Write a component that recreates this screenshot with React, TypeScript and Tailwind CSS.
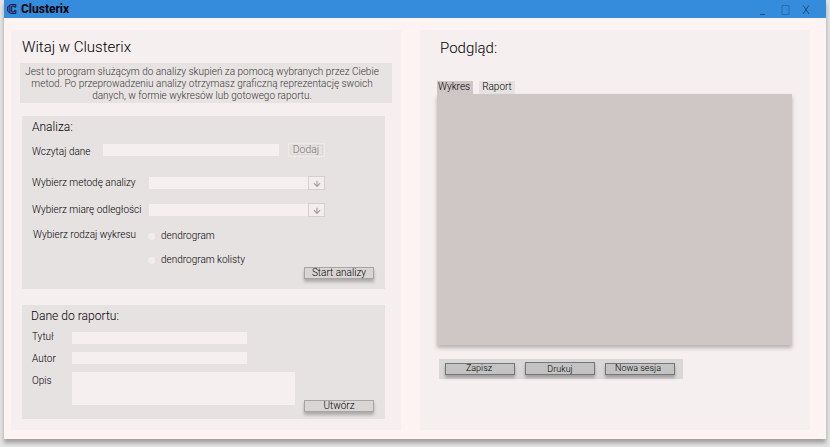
import React from "react";

function ArrowDown() {
  return (
    <span className="flex h-3.5 w-[17px] shrink-0 items-center justify-center border border-[#d5cfcf] bg-[#f3eded]">
      <svg className="mt-px h-2 w-2" viewBox="0 0 8 8" fill="none" stroke="#a39e9e" strokeWidth="1.1">
        <path d="M4 0.8V6.6M0.9 3.2L4 6.4L7.1 3.2" />
      </svg>
    </span>
  );
}

function SelectRow({ label }: { label: string }) {
  return (
    <div className="flex h-3.5 items-center">
      <span className="w-[117px] shrink-0 whitespace-nowrap pb-px text-[10px] leading-[13px]">{label}</span>
      <span className="h-3 w-[159px] bg-[#f5efef]" />
      <ArrowDown />
    </div>
  );
}

function RadioRow({ label }: { label: string }) {
  return (
    <span className="flex h-3.5 items-center gap-1.5">
      <span className="h-[7px] w-[7px] rounded-full bg-[#f2ecec]" />
      <span className="whitespace-nowrap pb-px text-[10px] leading-[13px]">{label}</span>
    </span>
  );
}

function RaisedButton({ label }: { label: string }) {
  return (
    <button className="flex h-3 w-[70px] shrink-0 items-center justify-center whitespace-nowrap border border-[#a7a4a4] bg-[#d9d5d5] text-[10px] leading-none shadow-[0_3px_3px_rgba(0,0,0,0.25)]">
      {label}
    </button>
  );
}

export default function App() {
  return (
    <div className="h-[447px] w-[830px] overflow-hidden bg-[#e4e4e4] pl-1 font-['Roboto','Liberation_Sans',sans-serif] font-light text-black">
      <div className="h-[439px] w-[822px] bg-[#fdf3f3] shadow-[0_4px_4px_rgba(0,0,0,0.3)]">
        <header className="flex h-[18px] items-center bg-[#358bdc] pl-[3px] text-black">
          <svg className="h-3 w-[10px]" viewBox="0 0 10 12" fill="none">
            <path
              d="M8.9 4.2V1.5H3.6L0.6 3.8V8.2L3.6 10.5H8.9V7.4H7.5V8.8H4.7V3.2H7.5V4.2H8.9"
              fill="#4b63bd"
              stroke="#0a1226"
              strokeWidth="0.8"
            />
            <path d="M2.8 2.8V9.2" stroke="#0a1226" strokeWidth="0.8" />
          </svg>
          <h1 className="ml-1 text-[12px] font-bold leading-[18px]">Clusterix</h1>
          <svg className="ml-auto mr-4 h-3 w-[50px]" viewBox="0 0 50 12" fill="none" stroke="#194d7e">
            <path d="M0 11.5H5" />
            <path d="M22 2.5H29V11.5H22Z" stroke="#286ca9" />
            <path d="M43.2 2.5L49 11M48.8 2.5L43 11" />
          </svg>
        </header>

        <main className="flex gap-[19px] pl-[7px] pt-3">
          <section className="h-[400px] w-[390px] bg-[#f5efef]">
            <h2 className="h-[33px] whitespace-nowrap pl-[11px] text-[15px] leading-[35px]">Witaj w Clusterix</h2>
            <p className="ml-[9px] h-10 w-[372px] whitespace-nowrap bg-[#e8e3e3] pr-2 pt-[3px] text-center text-[10px] leading-3 text-[#3a3737]">
              Jest to program służącym do analizy skupień za pomocą wybranych przez Ciebie
              <br />
              metod. Po przeprowadzeniu analizy otrzymasz graficzną reprezentację swoich
              <br />
              danych, w formie wykresów lub gotowego raportu.
            </p>

            <div className="ml-[11px] mt-[13px] h-[173px] w-[363px] bg-[#e7e2e2] pl-2.5">
              <h3 className="h-[27px] text-[12px] leading-[23px]">Analiza:</h3>
              <div className="flex h-3.5 items-center">
                <span className="w-[70.5px] shrink-0 pt-[3px] text-[10px] leading-[14px]">Wczytaj dane</span>
                <span className="h-3 w-44 bg-[#f5efef]" />
                <span className="ml-[9px] h-3.5 w-[37px] border border-[#eeeaea] p-px">
                  <button className="flex h-full w-full items-center justify-center whitespace-nowrap border border-[#ded9d9] pt-px text-[10.4px] leading-none text-[#757070]">
                    Dodaj
                  </button>
                </span>
              </div>
              <div className="mt-[19px] flex flex-col gap-[13px]">
                <SelectRow label="Wybierz metodę analizy" />
                <SelectRow label="Wybierz miarę odległości" />
              </div>
              <div className="mt-3 flex pl-px">
                <span className="w-[115px] shrink-0 whitespace-nowrap text-[10px] leading-3">Wybierz rodzaj wykresu</span>
                <div className="flex flex-col gap-2.5">
                  <RadioRow label="dendrogram" />
                  <RadioRow label="dendrogram kolisty" />
                </div>
              </div>
              <div className="flex justify-end pr-[11px]">
                <RaisedButton label="Start analizy" />
              </div>
            </div>

            <div className="ml-[11px] mt-4 h-[114px] w-[363px] bg-[#e7e2e2] pl-2.5">
              <h3 className="-ml-px h-[27px] text-[12.1px] leading-[23px]">Dane do raportu:</h3>
              <div className="flex h-3 items-center text-[10px] leading-3">
                <span className="w-10 pb-0.5">Tytuł</span>
                <span className="h-3 w-[175px] bg-[#f5efef]" />
              </div>
              <div className="mt-2 flex h-3 items-center text-[10px]">
                <span className="w-10">Autor</span>
                <span className="h-3 w-[175px] bg-[#f5efef]" />
              </div>
              <div className="mt-2 flex h-10 text-[10px]">
                <span className="w-10 leading-[17px]">Opis</span>
                <span className="h-[33px] w-[223px] bg-[#f5efef]" />
                <div className="ml-[9px] mt-7">
                  <RaisedButton label="Utwórz" />
                </div>
              </div>
            </div>
          </section>

          <section className="h-[400px] w-[390px] bg-[#f5efef]">
            <h2 className="h-[51px] pl-5 text-[15px] leading-[37px]">Podgląd:</h2>
            <nav className="flex h-[13px] gap-1.5 pl-[17px] text-[10px] leading-3">
              <span className="w-9 bg-[#cec6c6] pl-px">Wykres</span>
              <span className="w-9 bg-[#e7e2e2] text-center">Raport</span>
            </nav>
            <div className="ml-[17px] h-[251px] w-[355px] bg-[#cfc6c6] shadow-[0_3px_4px_rgba(0,0,0,0.25)]" />
            <div className="ml-[19px] mt-3.5 flex h-5 w-[244px] items-end gap-2.5 bg-[#d9d7d7] pb-1 pl-1.5 text-[9px] leading-[9px]">
              <button className="h-3 w-[70px] border border-[#777575] bg-[#c4c3c3] shadow-[0_3px_3px_rgba(0,0,0,0.25)]">
                <span className="block h-2.5 pr-0.5">Zapisz</span>
              </button>
              <button className="h-[13px] w-[70px] border border-[#777575] bg-[#c4c3c3] shadow-[0_3px_3px_rgba(0,0,0,0.25)]">
                <span className="block h-[11px] leading-[13px]">Drukuj</span>
              </button>
              <button className="h-3 w-[70px] border border-[#777575] bg-[#c4c3c3] shadow-[0_3px_3px_rgba(0,0,0,0.25)]">
                <span className="block h-2.5 pr-1">Nowa sesja</span>
              </button>
            </div>
          </section>
        </main>
      </div>
    </div>
  );
}
